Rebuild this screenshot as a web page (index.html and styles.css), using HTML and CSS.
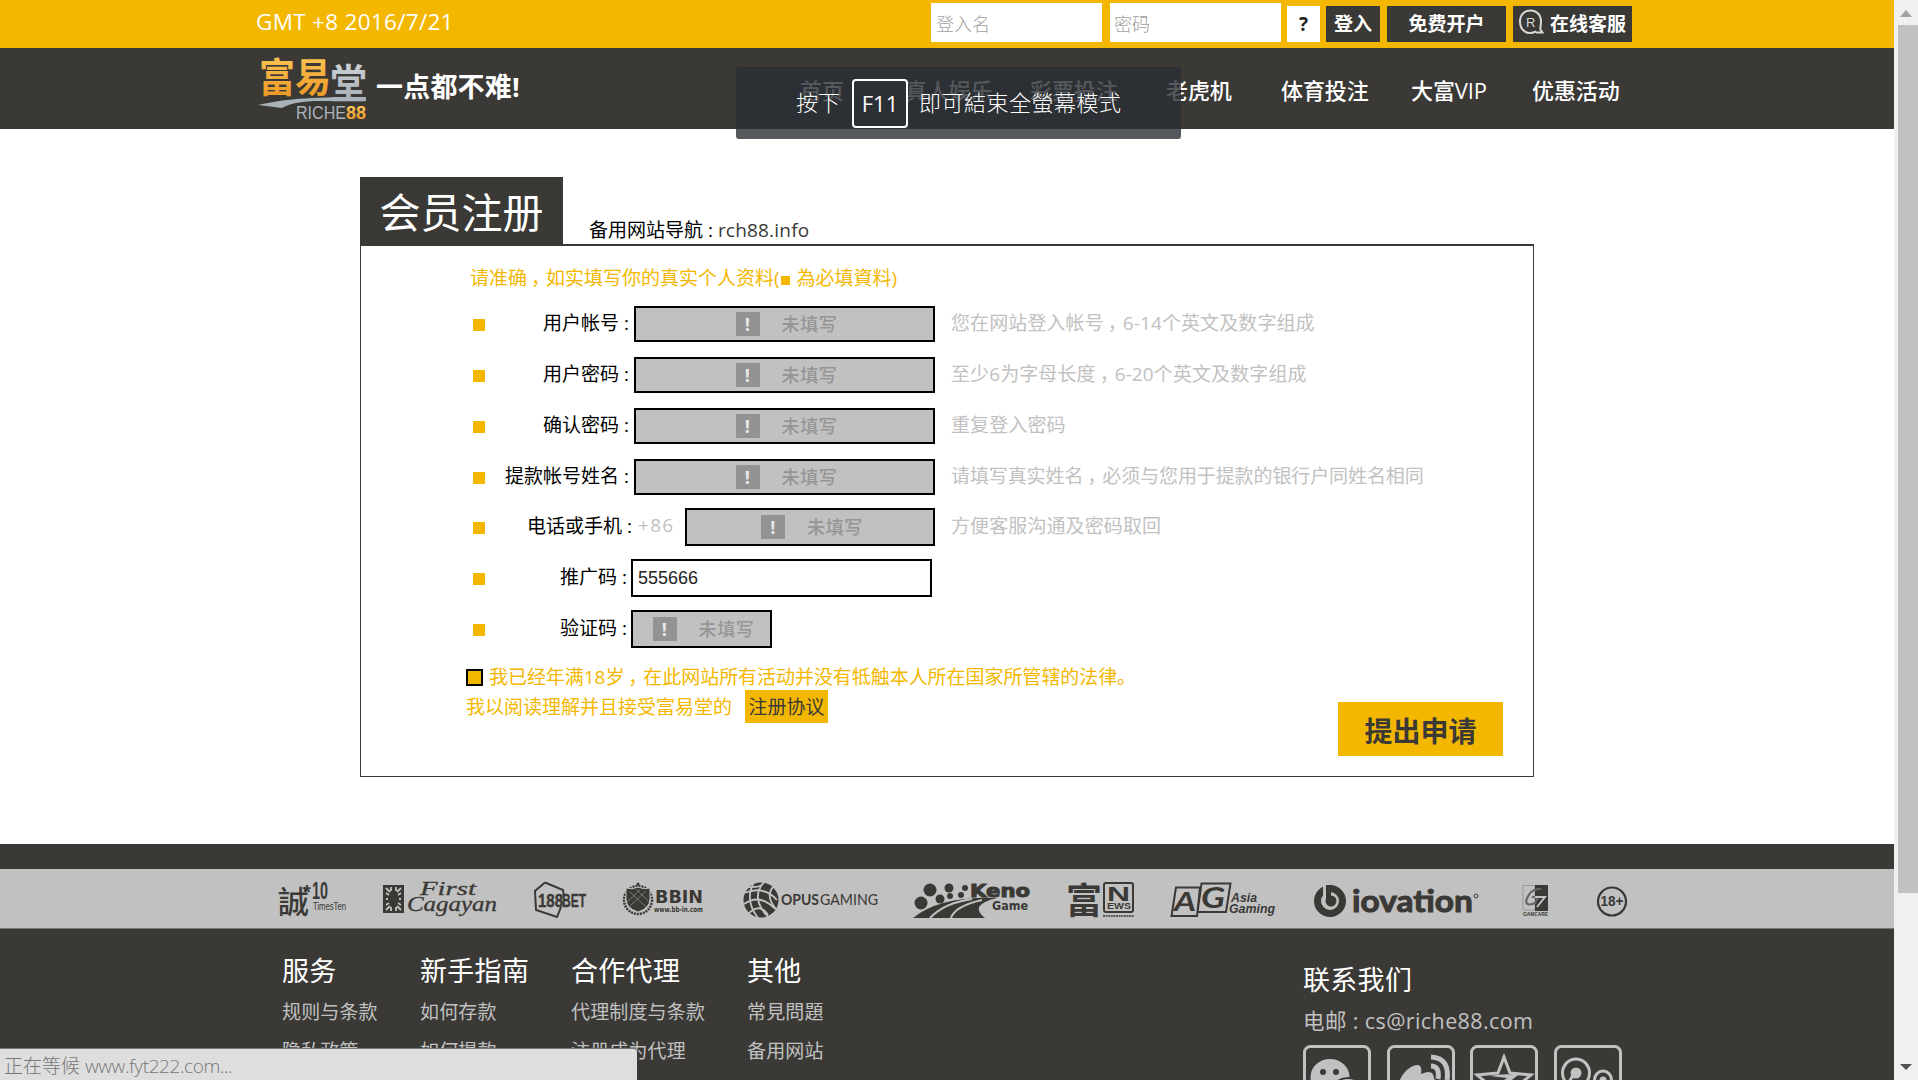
FILE: index.html
```html
<!DOCTYPE html>
<html lang="zh-CN">
<head>
<meta charset="utf-8">
<title>会员注册 - 富易堂</title>
<link rel="stylesheet" href="styles.css">
</head>
<body>
<div class="window">
<div class="page">
  <div class="topbar">
    <div class="clock">GMT +8 2016/7/21</div>
    <form class="login">
      <input class="login-input" type="text" placeholder="登入名">
      <input class="login-input login-pass" type="text" placeholder="密码">
      <button class="btn btn-help" type="button">?</button>
      <button class="btn btn-login" type="button">登入</button>
      <button class="btn btn-open" type="button">免费开户</button>
      <button class="btn btn-service" type="button">
        <svg width="25" height="26" viewBox="0 0 25 26" fill="none" stroke="#d8d8d8" stroke-width="2"><path d="M17 22.500C8 27 1 21 1 12.500C1 5 6 1.500 11.500 1.500S22 5 22 12.500C22 16 21 19 21.500 20.500L23.500 23.500H17"/><text x="7" y="18" class="badge-r" textLength="9">R</text></svg>
        <span>在线客服</span>
      </button>
    </form>
  </div>

  <div class="navbar">
    <div class="brand">
      <svg class="logo" width="110" height="70" viewBox="0 0 110 70">
        <defs>
          <linearGradient id="gold" x1="0" y1="0" x2="0" y2="1"><stop offset="0" stop-color="#ffd060"/><stop offset="1" stop-color="#e8901c"/></linearGradient>
          <linearGradient id="steel" x1="0" y1="0" x2="0" y2="1"><stop offset="0" stop-color="#d8dce0"/><stop offset="1" stop-color="#9da6ae"/></linearGradient>
        </defs>
        <text class="logo-cn" x="1" y="35" fill="url(#gold)" textLength="72" lengthAdjust="spacingAndGlyphs">富易</text>
        <text class="logo-cn" x="72" y="41" fill="url(#steel)" textLength="37" lengthAdjust="spacingAndGlyphs">堂</text>
        <path d="M0 48C30 41 60 40 108 40V44H62C45 44 33 46 24 51Z" fill="#a9b1b9"/>
        <text class="logo-en" x="38" y="62" fill="#aab2ba" textLength="50" lengthAdjust="spacingAndGlyphs">RICHE</text>
        <text class="logo-en logo-num" x="88" y="62" fill="url(#gold)" textLength="20" lengthAdjust="spacingAndGlyphs">88</text>
      </svg>
      <span class="slogan">一点都不难!</span>
    </div>
    <nav class="menu">
      <a class="m-home">首页</a><a class="m-live">真人娱乐</a><a class="m-lotto">彩票投注</a><a class="m-slot">老虎机</a><a class="m-sport">体育投注</a><a class="m-vip">大富VIP</a><a class="m-promo">优惠活动</a>
    </nav>
  </div>

  <main class="register">
    <div class="heading">
      <h1>会员注册</h1>
      <p>备用网站导航 : <span>rch88.info</span></p>
    </div>
    <section class="panel">
      <p class="notice">请准确<s>，</s>如实填写你的真实个人资料(<i></i> 為必填資料)</p>
      <div class="row"><i class="dot"></i><label>用户帐号 :</label><div class="field"><b>!</b><span>未填写</span></div><p class="hint">您在网站登入帐号<s>，</s>6-14个英文及数字组成</p></div>
      <div class="row"><i class="dot"></i><label>用户密码 :</label><div class="field"><b>!</b><span>未填写</span></div><p class="hint">至少6为字母长度<s>，</s>6-20个英文及数字组成</p></div>
      <div class="row"><i class="dot"></i><label>确认密码 :</label><div class="field"><b>!</b><span>未填写</span></div><p class="hint">重复登入密码</p></div>
      <div class="row"><i class="dot"></i><label>提款帐号姓名 :</label><div class="field"><b>!</b><span>未填写</span></div><p class="hint hint-long">请填写真实姓名<s>，</s>必须与您用于提款的银行户同姓名相同</p></div>
      <div class="row row-tall row-phone"><i class="dot"></i><label>电话或手机 :</label><em>+86</em><div class="field"><b>!</b><span>未填写</span></div><p class="hint">方便客服沟通及密码取回</p></div>
      <div class="row row-tall row-short"><i class="dot"></i><label>推广码 :</label><div class="field field-value">555666</div></div>
      <div class="row row-tall row-short"><i class="dot"></i><label>验证码 :</label><div class="field field-code"><b>!</b><span>未填写</span></div></div>
      <div class="agree agree-age"><i class="check"></i><span>我已经年满18岁<s>，</s>在此网站所有活动并没有牴触本人所在国家所管辖的法律。</span></div>
      <div class="agree agree-terms"><span>我以阅读理解并且接受富易堂的</span><a>注册协议</a></div>
      <button class="submit" type="button">提出申请</button>
    </section>
  </main>

  <footer class="footer">
    <div class="partners">
      <svg width="1894" height="60" viewBox="0 869 1894 60" fill="#3a3936" stroke="none">
        <g>
          <text x="278" y="913" class="cjk" font-size="31" font-weight="500" textLength="31" lengthAdjust="spacingAndGlyphs">誠</text>
          <text x="303" y="899" font-size="20" font-weight="700">*</text>
          <text x="312" y="899" font-size="23" font-weight="700" textLength="16" lengthAdjust="spacingAndGlyphs">10</text>
          <text x="313" y="910" font-size="10" textLength="33" lengthAdjust="spacingAndGlyphs">TimesTen</text>
        </g>
        <g>
          <rect x="383" y="885" width="21" height="28"/>
          <path d="M386 888L390 892M401 888L397 892M386 910L390 906M401 910L397 906M386 893L389 895M386 899H388M386 905L389 903M401 893L398 895M401 899H399M401 905L398 903M391 887V891M396 887V891M391 911V907M396 911V907" stroke="#c1c1c1" stroke-width="1.800"/>
          <text x="420" y="895" class="script" font-size="18" textLength="56" lengthAdjust="spacingAndGlyphs">First</text>
          <text x="407" y="911" class="script" font-size="20" textLength="90" lengthAdjust="spacingAndGlyphs">Cagayan</text>
        </g>
        <g>
          <path d="M545 882.500L563 890L564 896M561 907L557 917L536 910L535 891L545 882.500" fill="none" stroke="#3a3936" stroke-width="2"/>
          <text x="538" y="907" font-size="19" font-weight="700" stroke="#3a3936" stroke-width=".4" textLength="25" lengthAdjust="spacingAndGlyphs">188</text>
          <text x="562" y="907" font-size="19" font-weight="700" stroke="#3a3936" stroke-width=".4" textLength="24" lengthAdjust="spacingAndGlyphs">BET</text>
        </g>
        <g>
          <circle cx="638" cy="900" r="14" fill="none" stroke="#3a3936" stroke-width="2.500" stroke-dasharray="2 1"/>
          <path d="M626 888Q632 890 638 887Q644 890 650 888V899Q650 908 638 912Q626 908 626 899Z" stroke="#c1c1c1"/>
          <path d="M630 892L646 907M636 889L649 902M646 891L630 906M640 890L627 902" stroke="#777"/>
          <circle cx="638" cy="884" r="1.500"/>
          <text x="655" y="903" class="wide" font-size="17" font-weight="700" textLength="48" lengthAdjust="spacingAndGlyphs">BBIN</text>
          <text x="654" y="912" class="wide" font-size="7.500" font-weight="700" textLength="49" lengthAdjust="spacingAndGlyphs">www.bb-in.com</text>
        </g>
        <g>
          <circle cx="761" cy="900" r="17.500"/>
          <path d="M744 893Q764 885 777 900M744 904Q760 893 775 909M748 914Q760 902 768 915M754 882Q744 900 758 918M764 882Q750 898 768 917M774 886Q764 896 777 910M748 887Q762 888 764 882" fill="none" stroke="#c1c1c1" stroke-width="1.800"/>
          <text x="781" y="905" class="geo" font-size="16" font-weight="700" textLength="38" lengthAdjust="spacingAndGlyphs">OPUS</text>
          <text x="820" y="905" class="geo" font-size="16" textLength="58" lengthAdjust="spacingAndGlyphs">GAMING</text>
        </g>
        <g>
          <circle cx="930" cy="890" r="6.500"/><circle cx="949" cy="888" r="4.500"/><circle cx="921" cy="903" r="6.500"/><circle cx="940" cy="899" r="4.500"/><circle cx="950" cy="896" r="3"/><circle cx="965" cy="888" r="3"/><circle cx="961" cy="895" r="3"/>
          <path d="M913 918Q940 896 997 898Q968 905 985 918Z"/>
          <path d="M930 918Q944 903 972 899M951 918Q955 906 982 900" stroke="#c1c1c1" stroke-width="2" fill="none"/>
          <text x="970" y="897" class="wide" font-size="18" font-weight="700" stroke="#3a3936" textLength="60" lengthAdjust="spacingAndGlyphs">Keno</text>
          <text x="992" y="910" class="wide" font-size="12" font-weight="700" textLength="36" lengthAdjust="spacingAndGlyphs">Game</text>
        </g>
        <g>
          <text x="1066" y="914" class="cjk" font-size="36" font-weight="700" textLength="36" lengthAdjust="spacingAndGlyphs">富</text>
          <rect x="1104" y="883" width="29" height="29" rx="2" fill="none" stroke="#3a3936" stroke-width="2"/>
          <text x="1107" y="901" font-size="20" font-weight="700" textLength="23" lengthAdjust="spacingAndGlyphs">N</text>
          <text x="1107" y="909" font-size="8.500" font-weight="700" textLength="24" lengthAdjust="spacingAndGlyphs">EWS</text>
          <path d="M1103 916H1134" stroke="#3a3936" stroke-width="1.500" stroke-dasharray="2 .6"/>
        </g>
        <g>
          <path d="M1176 887.500H1200L1197 916H1171.500ZM1201.500 883.500H1230.500L1226 912H1197.500Z" fill="#c1c1c1" stroke="#3a3936" stroke-width="2"/>
          <text x="1174" y="911" class="geo" font-size="26" font-style="italic" font-weight="700" textLength="22" lengthAdjust="spacingAndGlyphs">A</text>
          <text x="1201" y="908" class="geo" font-size="28" font-style="italic" font-weight="700" textLength="24" lengthAdjust="spacingAndGlyphs">G</text>
          <text x="1231" y="902" font-size="12" font-style="italic" font-weight="700" textLength="26" lengthAdjust="spacingAndGlyphs">Asia</text>
          <text x="1229" y="913" font-size="12" font-style="italic" font-weight="700" textLength="46" lengthAdjust="spacingAndGlyphs">Gaming</text>
        </g>
        <g>
          <circle cx="1330" cy="901" r="12.500" fill="none" stroke="#3a3936" stroke-width="7"/>
          <path d="M1323 884H1326V900H1323Z" fill="#c1c1c1"/><path d="M1326 885H1331V901H1326Z"/><circle cx="1331" cy="901" r="5.500"/>
          <text x="1352" y="912" class="geo" font-size="31" font-weight="700" stroke="#3a3936" textLength="121" lengthAdjust="spacingAndGlyphs">iovation</text>
          <circle cx="1476" cy="896" r="2" fill="none" stroke="#3a3936"/>
        </g>
        <g>
          <path d="M1523 885.500H1535V910H1523Z" fill="none" stroke="#999"/><path d="M1535 885H1548V911H1535Z"/>
          <path d="M1541 889Q1530 888 1526 901Q1527 907 1535 903L1538 897H1532" fill="none" stroke="#666" stroke-width="2"/><path d="M1535 897H1545L1537 907" fill="none" stroke="#c1c1c1" stroke-width="2"/>
          <text x="1523" y="916" font-size="5.500" font-weight="700" textLength="25" lengthAdjust="spacingAndGlyphs">GAMCARE</text>
        </g>
        <g>
          <circle cx="1612" cy="901.500" r="14" fill="none" stroke="#3a3936" stroke-width="2.200"/>
          <text x="1600.500" y="906" font-size="14" font-weight="700" textLength="23" lengthAdjust="spacingAndGlyphs">18+</text>
        </g>
      </svg>
    </div>
    <div class="links">
      <div class="col col-a"><h3>服务</h3><a>规则与条款</a><a>隐私政策</a></div>
      <div class="col col-b"><h3>新手指南</h3><a>如何存款</a><a>如何提款</a></div>
      <div class="col col-c"><h3>合作代理</h3><a>代理制度与条款</a><a>注册成为代理</a></div>
      <div class="col col-d"><h3>其他</h3><a>常見問題</a><a>备用网站</a><a>支持中国各地银行</a></div>
      <div class="contact">
        <h3>联系我们</h3>
        <p>电邮 : cs@riche88.com</p>
        <div class="social">
          <svg width="68" height="68" viewBox="0 0 68 68"><rect class="frame" x="1.500" y="1.500" width="65" height="65" rx="6"/><ellipse cx="27" cy="32" rx="19.500" ry="18"/><circle class="hole" cx="20" cy="27" r="3"/><circle class="hole" cx="33" cy="27" r="3"/><ellipse class="cut" cx="45" cy="48" rx="17" ry="15"/><circle class="hole" cx="39" cy="41" r="2"/><circle class="hole" cx="50" cy="41" r="2"/></svg>
          <svg width="68" height="68" viewBox="0 0 68 68"><rect class="frame" x="1.500" y="1.500" width="65" height="65" rx="6"/><path d="M9 46Q14 26 26 21Q36 17 34 29Q47 23 47 34Q58 40 50 52Q30 66 12 54Z"/><ellipse class="cut" cx="31" cy="48" rx="16" ry="11"/><path class="line wave" d="M44 21Q53 21 51 34M44 12Q63 13 60 35"/></svg>
          <svg width="68" height="68" viewBox="0 0 68 68"><rect class="frame" x="1.500" y="1.500" width="65" height="65" rx="6"/><path class="line" d="M34 12L40 28L61 30L46 42L51 60L34 50L17 60L22 42L7 30L28 28Z"/><path d="M20 31Q34 28 48 30L33 42H24L37 33Z"/></svg>
          <svg width="68" height="68" viewBox="0 0 68 68"><rect class="frame" x="1.500" y="1.500" width="65" height="65" rx="6"/><ellipse class="line" cx="22" cy="28" rx="13.500" ry="14"/><circle cx="22" cy="28" r="5.500"/><ellipse class="line" cx="49" cy="35" rx="8.500" ry="9"/><circle cx="49" cy="35" r="3.500"/><path class="line" d="M22 28Q12 36 14 52M49 35Q50 46 44 52"/></svg>
        </div>
      </div>
    </div>
  </footer>
</div>
<div class="scrollbar"><i class="up"></i><div class="thumb"></div><i class="down"></i></div>
</div>

<div class="toast"><span>按下</span><kbd>F11</kbd><span class="toast-tail">即可結束全螢幕模式</span></div>
<div class="status">正在等候 <span>www.fyt222.com...</span></div>
</body>
</html>
```
FILE: styles.css
```css
* { box-sizing: border-box; }
body {
  margin: 0;
  background: #fff;
  color: #000;
  font: 19px/24px "Open Sans", "Noto Sans CJK SC", sans-serif;
  overflow: hidden;
}
h1, h3, p { margin: 0; font-weight: 400; }
i, em { font-style: normal; }
button, input { font-family: inherit; border: 0; padding: 0; }
/* full-width comma, centred in its cell */
s { display: inline-block; width: 19px; text-indent: 4px; text-decoration: none; white-space: nowrap; }
.window { display: flex; height: 1080px; overflow: hidden; }
.page { width: 1894px; flex: none; }

.topbar { height: 48px; background: #f4b700; display: flex; justify-content: space-between; padding: 0 262px 0 256px; }
.clock { color: #fff; font-size: 22.500px; line-height: 43px; letter-spacing: .3px; }
.login { display: flex; align-items: flex-start; padding-top: 3px; }
.login-input { width: 171px; height: 39px; background: #fff; padding: 2px 0 0 5px; font-size: 18px; font-weight: 300; }
.login-input::placeholder { color: #a0a0a0; opacity: 1; }
.login-pass { margin-left: 8px; padding-left: 4px; }
.btn { height: 36px; margin-top: 3px; background: #3a3936; color: #fff; font-size: 19px; font-weight: 700; line-height: 34px; }
.btn-help { width: 33px; margin-left: 6px; background: #fff; color: #222; }
.btn-login { width: 54px; margin-left: 6px; line-height: 37px; }
.btn-open { width: 119px; margin-left: 7px; }
.btn-service { width: 119px; margin-left: 7px; display: flex; align-items: center; gap: 6px; padding-left: 6px; }
.btn-service svg { flex: none; margin-top: -4px; }
.btn-service span { white-space: nowrap; }
.badge-r { font: 13px "Liberation Sans", sans-serif; fill: #d8d8d8; stroke: none; }

.navbar { height: 81px; background: #3a3936; display: flex; }
.brand { width: 803px; flex: none; padding: 9px 0 0 258px; display: flex; }
.logo { flex: none; overflow: visible; }
.logo-cn { font: 700 40px "Noto Sans CJK SC", sans-serif; }
.logo-en { font: 18px "Liberation Sans", sans-serif; }
.logo-num { font-weight: 700; }
.slogan { color: #fff; font-size: 27px; font-weight: 700; line-height: 60px; margin-left: 8px; letter-spacing: .2px; white-space: nowrap; }
.menu { display: flex; color: #fff; font-size: 22px; font-weight: 500; line-height: 85px; white-space: nowrap; }
.menu a { letter-spacing: -.1px; }
.m-home { margin-left: -3px; width: 105px; }
.m-live { width: 125px; }
.m-lotto { width: 136px; }
.m-slot { width: 115px; }
.m-sport { width: 130px; }
.m-vip { width: 121px; }

.register { width: 1174px; margin: 48px 0 0 360px; }
.heading { display: flex; height: 67px; }
.heading h1 { width: 203px; height: 68px; background: #3a3936; color: #fff; font-size: 41px; line-height: 70px; text-align: center; }
.heading p { margin: 41px 0 0 26px; }
.heading p span { color: #3a3936; letter-spacing: .2px; }
.panel { position: relative; height: 533px; border: 1px solid #3a3936; border-top-width: 2px; padding: 20px 0 0 105px; }
.notice { color: #f4b700; padding-left: 4px; margin-bottom: 16px; }
.notice i { display: inline-block; width: 9px; height: 9px; background: #f4b700; vertical-align: 0; margin: 0 2px 0 1px; }
.row { display: flex; align-items: center; height: 36px; margin-bottom: 15px; white-space: nowrap; }
.dot { width: 12px; height: 12px; background: #f4b700; margin: 1px 0 0 7px; flex: none; }
.row label { width: 144px; text-align: right; margin-right: 5px; margin-top: -2px; }
.field { width: 301px; height: 36px; border: 2px solid #000; background: #c1c1c1; display: flex; justify-content: center; align-items: center; gap: 22px; color: #959595; font-size: 18px; font-weight: 500; letter-spacing: .6px; }
.field b { width: 24px; height: 24px; background: #939393; color: #e8e8e8; text-align: center; line-height: 24px; font-weight: 700; margin-left: 4px; }
.hint { color: #c1c1c1; margin: -2px 0 0 16px; letter-spacing: .1px; }
.hint-long { letter-spacing: -.1px; }
.row-tall { height: 38px; margin-bottom: 13px; }
.row-tall .field { height: 38px; }
.row-phone { margin-top: -2px; }
.row-phone label { width: 147px; }
.row-phone em { width: 48px; color: #c1c1c1; margin-top: -4px; padding-left: 1px; letter-spacing: 1.300px; }
.row-phone .field { width: 250px; }
.row-short label { width: 142px; margin-right: 4px; }
.row .field-value { background: #fff; color: #222; justify-content: flex-start; padding-left: 5px; font: 18px "Liberation Sans", sans-serif; letter-spacing: 0; }
.row .field-code { width: 141px; }
.agree { display: flex; align-items: center; height: 30px; color: #f4b700; white-space: nowrap; }
.agree-age { padding-top: 2px; letter-spacing: -.05px; }
.check { width: 17px; height: 17px; border: 2px solid #000; background: #f4b700; margin-right: 6px; }
.agree-terms { height: 33px; margin-top: -1px; }
.agree a { margin-left: 13px; width: 83px; height: 33px; line-height: 34px; text-align: center; background: #f4b700; color: #3a3936; }
.submit { position: absolute; right: 30px; bottom: 20px; width: 165px; height: 54px; background: #f4b700; color: #3a3936; font-size: 28px; font-weight: 700; line-height: 58px; }

.footer { margin-top: 67px; border-top: 25px solid #3a3936; background: #3a3936; height: 300px; }
.partners { height: 60px; background: #c1c1c1; border-bottom: 1px solid #777; }
.partners svg { display: block; }
.partners text { font-family: "Liberation Sans", sans-serif; }
.partners .cjk { font-family: "Noto Sans CJK TC", sans-serif; }
.partners .script { font-family: "Liberation Serif", serif; font-style: italic; stroke: #3a3936; stroke-width: .3px; }
.partners .wide { font-family: "DejaVu Sans", sans-serif; }
.partners .geo { font-family: Lato, sans-serif; }
.links { display: flex; padding: 22px 0 0 282px; color: #c1c1c1; white-space: nowrap; }
.links h3 { color: #fff; font-size: 27px; line-height: 40px; letter-spacing: .3px; }
.col a { display: block; height: 39px; line-height: 39px; letter-spacing: .15px; }
.col h3 { height: 42px; }
.col-a { width: 138px; }
.col-b { width: 151px; }
.col-c { width: 176px; }
.col-d { width: 556px; }
.contact { padding-top: 9px; }
.contact p { font-size: 21.500px; line-height: 30px; margin-top: 6px; letter-spacing: .4px; }
.social { display: flex; gap: 15.500px; margin-top: 9px; }
.social svg { fill: #c1c1c1; flex: none; }
.social .frame, .social .line { fill: none; stroke: #c1c1c1; stroke-width: 3; }
.social .wave { stroke-width: 5; }
.social .hole { fill: #3a3936; }
.social .cut { stroke: #3a3936; stroke-width: 2; }

.scrollbar { width: 24px; background: #f0f0f0; display: flex; flex-direction: column; align-items: center; }
.up, .down { border: 6px solid transparent; }
.up { border-top: 0; border-bottom: 7px solid #a3a3a3; margin: 10px 0 8px; }
.thumb { width: 20px; height: 868px; background: #c1c1c1; margin-left: 3px; }
.down { border-bottom: 0; border-top: 6px solid #505050; margin-top: 171px; }

.toast { position: absolute; left: 736px; top: 67px; width: 445px; height: 72px; border-radius: 3px; background: rgba(41, 45, 51, .8); color: #fff; display: flex; align-items: center; font-size: 22px; font-weight: 300; padding-left: 60px; white-space: nowrap; }
.toast span { margin-top: -2px; }
.toast kbd { width: 56px; height: 49px; border: 2px solid #fff; border-radius: 4px; margin: 0 11px 0 12px; text-align: center; font: 400 22px/44px "Open Sans", sans-serif; }
.toast-tail { letter-spacing: .5px; }
.status { position: absolute; left: 0; bottom: 0; width: 637px; height: 32px; border-top: 1px solid #777; border-top-right-radius: 4px; background: #dedede; color: #777; font-size: 19px; font-weight: 300; line-height: 34px; padding-left: 4px; }
.status span { letter-spacing: -.4px; }
```
